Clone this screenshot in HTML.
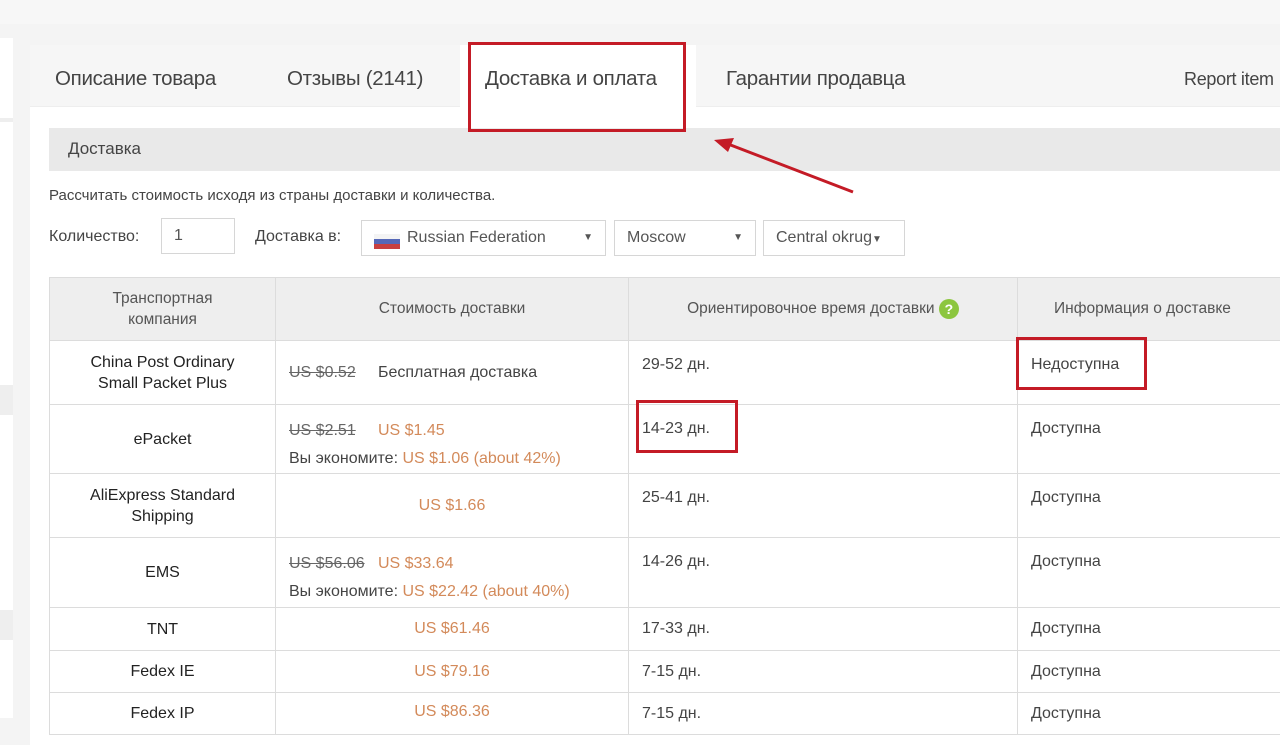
<!DOCTYPE html>
<html><head><meta charset="utf-8"><style>
*{margin:0;padding:0;box-sizing:border-box}
body{width:1280px;height:720px;overflow:hidden;background:#f4f4f4;font-family:"Liberation Sans",sans-serif;color:#333;position:relative}
.abs{position:absolute}
.panel{left:30px;top:45px;width:1260px;height:700px;background:#fff}
.tabbar{left:30px;top:45px;width:1250px;height:62px;background:#f6f6f6;border-bottom:1px solid #eee}
.tab{top:67px;font-size:20.5px;color:#444;letter-spacing:-0.3px}
.act{left:460px;top:45px;width:236px;height:70px;background:#fff}
.dhead{left:49px;top:128px;width:1231px;height:43px;background:#e9e9e9;font-size:17px;padding:11px 19px;color:#444}
.t{font-size:15px;color:#444}
.box{border:1px solid #d6d6d6;background:#fff;height:36px;font-size:16px;color:#555;padding:8px 12px}
table{position:absolute;left:49px;top:277px;border-collapse:collapse;width:1250px;font-size:16px;color:#444}
td,th{border:1px solid #dcdcdc;vertical-align:top}
th{background:#eeeeee;font-weight:normal;height:63px;vertical-align:middle;color:#555;font-size:15.5px}
td.n{text-align:center;vertical-align:middle;color:#222;line-height:21px}
td.p{padding:20px 13px 0}
td.d{padding:15px 13px 0}
s{color:#666}
.o{color:#d38a5a}
.red{border:3px solid #c41b26;position:absolute}
</style></head><body>
<div class="abs" style="left:0;top:0;width:1280px;height:24px;background:#f7f7f7"></div>
<div class="abs" style="left:0;top:38px;width:13px;height:680px;background:#fff"></div>
<div class="abs" style="left:0;top:118px;width:13px;height:4px;background:#eee"></div>
<div class="abs" style="left:0;top:385px;width:13px;height:30px;background:#eee"></div>
<div class="abs" style="left:0;top:610px;width:13px;height:30px;background:#eee"></div>
<div class="abs panel"></div>
<div class="abs tabbar"></div>
<div class="abs act"></div>
<div class="abs tab" style="left:55px">Описание товара</div>
<div class="abs tab" style="left:287px">Отзывы (2141)</div>
<div class="abs tab" style="left:485px">Доставка и оплата</div>
<div class="abs tab" style="left:726px">Гарантии продавца</div>
<div class="abs tab" style="left:1184px;font-size:18px;top:69px">Report item</div>
<div class="abs dhead">Доставка</div>
<div class="abs t" style="left:49px;top:187px">Рассчитать стоимость исходя из страны доставки и количества.</div>
<div class="abs t" style="left:49px;top:228px;font-size:16px">Количество:</div>
<div class="abs box" style="left:161px;top:218px;width:74px">1</div>
<div class="abs t" style="left:255px;top:228px;font-size:16px">Доставка в:</div>
<div class="abs box" style="left:361px;top:220px;width:245px;padding-left:45px">Russian Federation<span style="position:absolute;right:12px;font-size:10px;top:11px">▼</span></div>
<div class="abs" style="left:374px;top:234px;width:26px;height:15px;background:linear-gradient(#f4f4f4 33%,#5668b8 33% 66%,#c84040 66%)"></div>
<div class="abs box" style="left:614px;top:220px;width:142px">Moscow<span style="position:absolute;right:12px;font-size:10px;top:11px">▼</span></div>
<div class="abs box" style="left:763px;top:220px;width:142px">Central okrug<span style="font-size:10px">▼</span></div>
<table>
<tr><th style="width:226px;line-height:21px">Транспортная<br>компания</th><th style="width:353px">Стоимость доставки</th><th style="width:389px">Ориентировочное время доставки <span style="display:inline-block;width:20px;height:20px;border-radius:50%;background:#8cc63f;color:#fff;font-size:14px;font-weight:bold;line-height:20px;vertical-align:middle">?</span></th><th style="text-align:left;padding-left:36px">Информация о доставке</th></tr>
<tr style="height:64px"><td class="n">China Post Ordinary<br>Small Packet Plus</td><td class="p" style="padding-top:23px"><s>US $0.52</s>&nbsp;&nbsp;&nbsp;&nbsp; Бесплатная доставка</td><td class="d">29-52 дн.</td><td class="d">Недоступна</td></tr>
<tr style="height:69px"><td class="n">ePacket</td><td class="p" style="padding-top:12px;line-height:28px"><s>US $2.51</s>&nbsp;&nbsp;&nbsp;&nbsp; <span class="o">US $1.45</span><br>Вы экономите: <span class="o">US $1.06 (about 42%)</span></td><td class="d">14-23 дн.</td><td class="d">Доступна</td></tr>
<tr style="height:64px"><td class="n">AliExpress Standard<br>Shipping</td><td class="o" style="text-align:center;vertical-align:middle">US $1.66</td><td class="d">25-41 дн.</td><td class="d">Доступна</td></tr>
<tr style="height:70px"><td class="n">EMS</td><td class="p" style="padding-top:12px;line-height:28px"><s>US $56.06</s>&nbsp;&nbsp; <span class="o">US $33.64</span><br>Вы экономите: <span class="o">US $22.42 (about 40%)</span></td><td class="d">14-26 дн.</td><td class="d">Доступна</td></tr>
<tr style="height:43px"><td class="n">TNT</td><td class="o" style="text-align:center;vertical-align:middle">US $61.46</td><td class="d" style="padding-top:12px">17-33 дн.</td><td class="d" style="padding-top:12px">Доступна</td></tr>
<tr style="height:42px"><td class="n">Fedex IE</td><td class="o" style="text-align:center;vertical-align:middle">US $79.16</td><td class="d" style="padding-top:12px">7-15 дн.</td><td class="d" style="padding-top:12px">Доступна</td></tr>
<tr style="height:42px"><td class="n" style="vertical-align:top;padding-top:10px">Fedex IP</td><td class="o" style="text-align:center;padding-top:10px">US $86.36</td><td class="d" style="padding-top:12px">7-15 дн.</td><td class="d" style="padding-top:12px">Доступна</td></tr>
</table>
<div class="red" style="left:468px;top:42px;width:218px;height:90px"></div>
<div class="red" style="left:1016px;top:337px;width:131px;height:53px"></div>
<div class="red" style="left:636px;top:400px;width:102px;height:53px"></div>
<svg class="abs" style="left:700px;top:130px" width="170" height="75"><line x1="153" y1="62" x2="28" y2="14" stroke="#c41b26" stroke-width="3"/><polygon points="14,10 34,8 28,22" fill="#c41b26"/></svg>
</body></html>
